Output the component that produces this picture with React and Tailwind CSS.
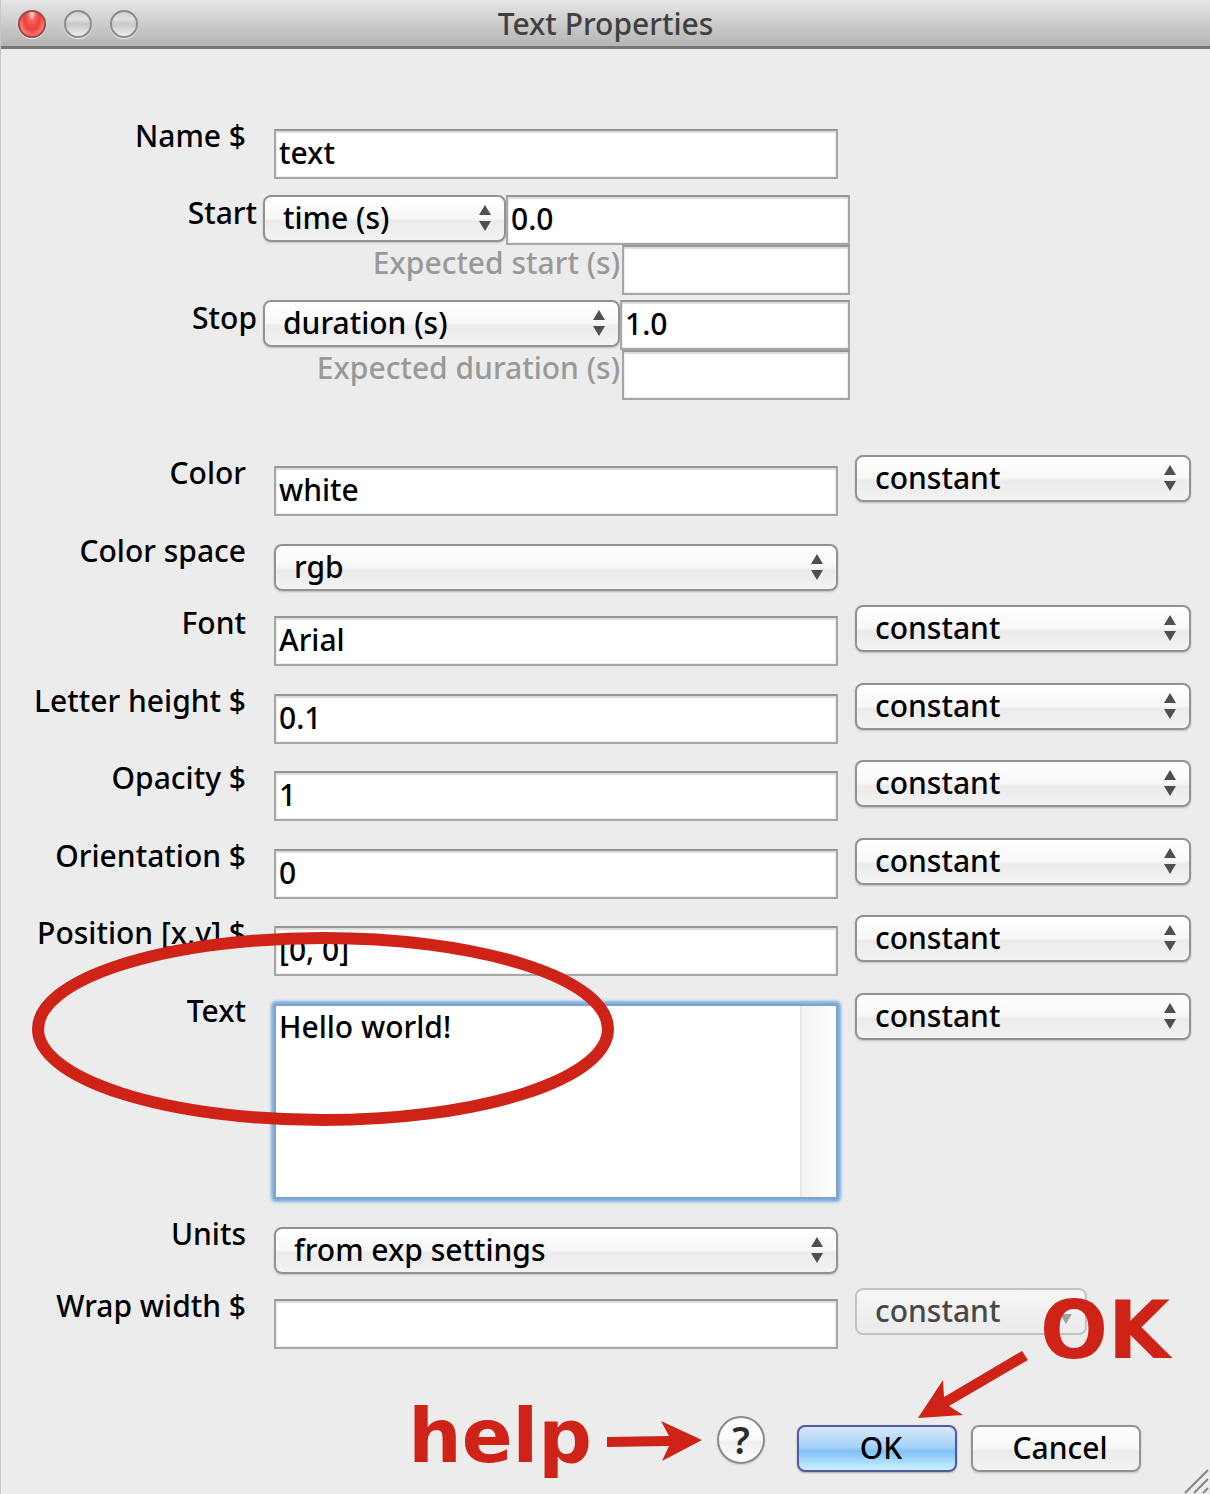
import React from "react";

const inputClass =
  "block w-full min-w-0 h-[50px] border-2 border-[#a6a6a6] border-t-[#969696] bg-white pl-[3px] pr-1 pb-1 leading-9 font-medium text-black shadow-[inset_0_2px_1px_#dcdcdc,inset_0_0_1px_1px_#eeeeee] outline-none rounded-none";

function Arrows({ faded }) {
  return (
    <svg
      viewBox="0 0 12 26"
      className={
        "pointer-events-none absolute right-[15px] top-2.5 h-[26px] w-3 " +
        (faded ? "fill-[#a0a0a0]" : "fill-[#4f4f4f]")
      }
      aria-hidden="true"
    >
      <path d="M6 0 L12 10 H0 Z" />
      <path d="M6 26 L0 16 H12 Z" />
    </svg>
  );
}

function Select({ id, label, value, className = "w-full", disabled }) {
  return (
    <div className={"relative h-[47px] shrink-0 " + className}>
      <select
        id={id}
        aria-label={label}
        disabled={disabled}
        defaultValue={value}
        className={
          "block h-[47px] w-full appearance-none rounded-lg border-2 pl-[18px] pr-8 pb-0.5 leading-9 font-medium outline-none " +
          (disabled
            ? "border-[#c2c2c2] bg-linear-to-b from-[#f6f6f6] to-[#ebebeb] text-[#484848] opacity-100"
            : "border-[#929292] bg-[linear-gradient(#ffffff_0%,#f8f8f8_48%,#ebebeb_56%,#f3f3f3_100%)] text-black shadow-[0_1px_2px_#bdbdbd]")
        }
      >
        <option>{value}</option>
      </select>
      <Arrows faded={disabled} />
    </div>
  );
}

function Row({ id, label, tight, children, update, updateWidth, updateDisabled }) {
  return (
    <div className="grid grid-cols-[245px_minmax(0,1fr)_336px]">
      <label htmlFor={id} className="text-right leading-9 whitespace-nowrap">
        {label}
      </label>
      <div className={"ml-7 mr-[17px] pt-[11px] " + (tight ? "pb-0.5" : "pb-[3px]")}>{children}</div>
      {update && (
        <Select
          label={label + " update"}
          value="constant"
          className={updateWidth}
          disabled={updateDisabled}
        />
      )}
    </div>
  );
}

function TextRow({ id, value, ...rest }) {
  return (
    <Row id={id} {...rest}>
      <input id={id} type="text" defaultValue={value} className={inputClass} />
    </Row>
  );
}

function SelectRow({ id, label, value }) {
  return (
    <div className="grid grid-cols-[245px_minmax(0,1fr)_336px]">
      <label htmlFor={id} className="text-right leading-9 whitespace-nowrap">
        {label}
      </label>
      <div className="ml-7 mr-[17px] pt-[11px]">
        <Select id={id} value={value} />
      </div>
    </div>
  );
}

function TimeRow({ id, label, kind, kindWidth, value, expected }) {
  return (
    <div>
      <div className="flex">
        <label htmlFor={id} className="mr-1.5 w-[256px] shrink-0 text-right leading-9">
          {label}
        </label>
        <Select label={label + " type"} value={kind} className={kindWidth} />
        <input id={id} type="text" defaultValue={value} className={inputClass + " flex-1"} />
      </div>
      <div className="flex justify-end">
        <label htmlFor={id + "-expected"} className="mr-0.5 leading-9 text-[#999999]">
          {expected}
        </label>
        <div className="w-[228px]">
          <input id={id + "-expected"} type="text" className={inputClass} />
        </div>
      </div>
    </div>
  );
}

function Light({ red }) {
  return (
    <button
      type="button"
      aria-label={red ? "Close" : "Window control"}
      className={
        "h-7 w-7 rounded-full border-2 shadow-[0_1px_1px_#f2f2f2] " +
        (red
          ? "border-[#9b4a48] bg-[radial-gradient(ellipse_at_50%_8%,#ffe4e0_0%,#f2605b_24%,#ee3d3a_50%,#f77b76_75%,#ffc0bc_100%)]"
          : "border-[#8c8c8c] bg-[linear-gradient(#d2d2d2_0%,#e0e0e0_30%,#c8c8c8_50%,#eeeeee_100%)]")
      }
    />
  );
}

export default function App() {
  return (
    <div className="relative min-h-screen overflow-hidden border-l border-[#c6c6c6] bg-[#ececec] font-['Noto_Sans',sans-serif] text-[30px] font-medium text-black">
      <header className="relative flex h-[49px] items-center justify-center border-b-[3px] border-[#757575] bg-linear-to-b from-[#e6e6e6] to-[#b4b4b4]">
        <div className="absolute left-[17px] top-2.5 flex gap-[18px]">
          <Light red />
          <Light />
          <Light />
        </div>
        <h1 className="pt-0.5 leading-9 font-medium text-[#404040]">Text Properties</h1>
      </header>

      <main className="pr-[19px] pt-[69px]">
        <TextRow id="name" label="Name $" value="text" tight />
        <div className="mr-[341px] mt-3.5 flex flex-col gap-[5px]">
          <TimeRow
            id="start"
            label="Start"
            kind="time (s)"
            kindWidth="w-[243px]"
            value="0.0"
            expected="Expected start (s)"
          />
          <TimeRow
            id="stop"
            label="Stop"
            kind="duration (s)"
            kindWidth="w-[357px]"
            value="1.0"
            expected="Expected duration (s)"
          />
        </div>

        <div className="mt-[55px] flex flex-col gap-3.5">
          <TextRow id="color" label="Color" value="white" update />
          <SelectRow id="space" label="Color space" value="rgb" />
          <TextRow id="font" label="Font" value="Arial" update />
          <TextRow id="height" label="Letter height $" value="0.1" update tight />
          <TextRow id="opacity" label="Opacity $" value="1" update />
          <TextRow id="orientation" label="Orientation $" value="0" update tight />
          <TextRow id="position" label="Position [x,y] $" value="[0, 0]" update />
          <Row id="text" label="Text" update>
            <div className="flex h-[195px] rounded-xs border-2 border-[#7fa3ca] bg-white shadow-[0_0_3px_3px_#7aaee2]">
              <textarea
                id="text"
                defaultValue="Hello world!"
                className="block min-w-0 flex-1 resize-none overflow-hidden bg-transparent pl-[3px] pt-[3px] leading-9 font-medium outline-none"
              />
              <div className="w-9 border-l-2 border-[#e6e6e6] bg-linear-to-r from-[#f3f3f3] to-[#fdfdfd]" />
            </div>
          </Row>
          <SelectRow id="units" label="Units" value="from exp settings" />
          <TextRow
            id="wrap"
            label="Wrap width $"
            value=""
            update
            updateWidth="w-[232px]"
            updateDisabled
          />
        </div>
      </main>

      <footer className="mt-16 flex items-start justify-end pb-5 pr-[69px]">
        <button
          type="button"
          aria-label="Help"
          className="mr-8 h-12 w-12 rounded-full border-2 border-[#8a8a8a] bg-[linear-gradient(#ffffff_0%,#fafafa_48%,#efefef_56%,#ffffff_100%)] pb-0.5 text-[38px] font-semibold leading-9 text-[#2c2c2c] shadow-[0_1px_2px_#c8c8c8]"
        >
          ?
        </button>
        <button
          type="button"
          className="mr-3.5 mt-[9px] h-[47px] w-[160px] rounded-lg border-2 border-[#5558a0] bg-[linear-gradient(#d6e8fb_0%,#a5d0f9_48%,#7fc0f8_56%,#c9f3fe_100%)] pb-0.5 pl-2 leading-9 shadow-[0_1px_2px_#a8a8b8]"
        >
          OK
        </button>
        <button
          type="button"
          className="mt-[9px] h-[47px] w-[170px] rounded-lg border-2 border-[#929292] bg-[linear-gradient(#ffffff_0%,#f8f8f8_48%,#ebebeb_56%,#f3f3f3_100%)] pb-0.5 pl-2 leading-9 shadow-[0_1px_2px_#bdbdbd]"
        >
          Cancel
        </button>
      </footer>

      <svg
        viewBox="0 0 28 28"
        className="absolute bottom-0 right-0 h-7 w-7 stroke-[#858585]"
        strokeWidth="2"
        aria-hidden="true"
      >
        <path d="M3 27 L26 4 M12 27 L26 13 M21 27 L26 22" />
      </svg>

      <svg
        viewBox="0 0 582 194"
        className="pointer-events-none absolute left-[31px] top-[932px] h-[194px] w-[582px]"
        aria-hidden="true"
      >
        <ellipse cx="291" cy="97" rx="285" ry="91" fill="none" stroke="#cf2317" strokeWidth="12" />
      </svg>

      <div className="pointer-events-none absolute right-[508px] top-[1392px] flex items-start gap-[15px] text-[#cf2317]">
        <span className="font-['DejaVu_Sans',sans-serif] text-[75px] font-bold leading-[88px]">
          help
        </span>
        <svg viewBox="0 0 95 42" className="mt-7 h-[42px] w-[95px] fill-[#cf2317]" aria-hidden="true">
          <path d="M0 17 L62 16 L54 1 L95 20 L55 41 L62 26 L0 27 Z" />
        </svg>
      </div>

      <span className="pointer-events-none absolute right-[40px] top-[1284px] font-['DejaVu_Sans',sans-serif] text-[80px] font-bold leading-[94px] text-[#cf2317]">
        OK
      </span>
      <svg
        viewBox="0 0 110 68"
        className="pointer-events-none absolute right-[182px] top-[1350px] h-[68px] w-[110px] fill-[#cf2317]"
        aria-hidden="true"
      >
        <path d="M0 68 L25 30 L26 47 L104 1 L110 10 L31 56 L45 65 Z" />
      </svg>
    </div>
  );
}
